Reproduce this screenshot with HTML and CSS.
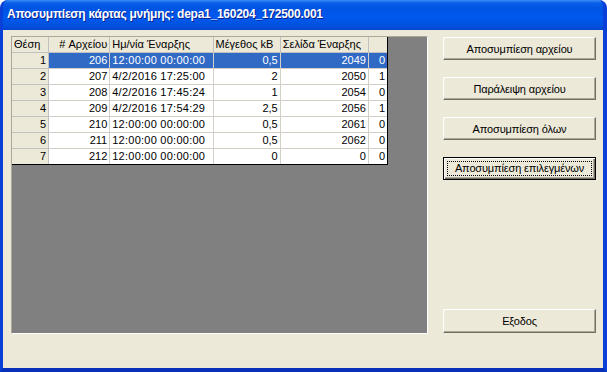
FILE: index.html
```html
<!DOCTYPE html>
<html lang="el">
<head>
    <meta charset="UTF-8">
    <title>Αποσυμπίεση κάρτας μνήμης</title>
    <link rel="stylesheet" href="styles.css">
</head>
<body>
    <div class="window">
        <!-- Titlebar -->
        <div class="titlebar">Αποσυμπίεση κάρτας μνήμης: depa1_160204_172500.001</div>

        <div class="client">
            <!-- Lijst met bestanden -->
            <div class="grid-box">
                <table class="grid">
                    <colgroup>
                        <col style="width:37px">
                        <col style="width:61px">
                        <col style="width:103px">
                        <col style="width:67px">
                        <col style="width:88px">
                        <col style="width:18px">
                    </colgroup>
                    <thead>
                        <tr>
                            <th>Θέση</th>
                            <th class="num">#&nbsp;Αρχείου</th>
                            <th>Ημ/νία Έναρξης</th>
                            <th>Μέγεθος kB</th>
                            <th>Σελίδα Έναρξης</th>
                            <th></th>
                        </tr>
                    </thead>
                    <tbody>
                        <tr class="selected">
                            <th class="num">1</th><td class="num">206</td><td class="date">12:00:00 00:00:00</td><td class="num">0,5</td><td class="num">2049</td><td class="num">0</td>
                        </tr>
                        <tr>
                            <th class="num">2</th><td class="num">207</td><td class="date">4/2/2016 17:25:00</td><td class="num">2</td><td class="num">2050</td><td class="num">1</td>
                        </tr>
                        <tr>
                            <th class="num">3</th><td class="num">208</td><td class="date">4/2/2016 17:45:24</td><td class="num">1</td><td class="num">2054</td><td class="num">0</td>
                        </tr>
                        <tr>
                            <th class="num">4</th><td class="num">209</td><td class="date">4/2/2016 17:54:29</td><td class="num">2,5</td><td class="num">2056</td><td class="num">1</td>
                        </tr>
                        <tr>
                            <th class="num">5</th><td class="num">210</td><td class="date">12:00:00 00:00:00</td><td class="num">0,5</td><td class="num">2061</td><td class="num">0</td>
                        </tr>
                        <tr>
                            <th class="num">6</th><td class="num">211</td><td class="date">12:00:00 00:00:00</td><td class="num">0,5</td><td class="num">2062</td><td class="num">0</td>
                        </tr>
                        <tr>
                            <th class="num">7</th><td class="num">212</td><td class="date">12:00:00 00:00:00</td><td class="num">0</td><td class="num">0</td><td class="num">0</td>
                        </tr>
                    </tbody>
                </table>
            </div>

            <!-- Knoppen -->
            <div class="buttons">
                <button class="btn">Αποσυμπίεση αρχείου</button>
                <button class="btn">Παράλειψη αρχείου</button>
                <button class="btn">Αποσυμπίεση όλων</button>
                <button class="btn default"><span>Αποσυμπίεση επιλεγμένων</span></button>
                <button class="btn exit">Εξοδος</button>
            </div>
        </div>
    </div>
</body>
</html>
```

FILE: styles.css
```css
body {
    margin: 0;
    padding: 0;
    background: #ffffff;
}
.window {
    width: 607px;
    height: 372px;
    box-sizing: border-box;
    display: flex;
    flex-direction: column;
    background: #0a50dc;
    border-radius: 8px 8px 0 0;
    border-left: 3px solid #0a3fd8;
    border-right: 4px solid #0a3fd8;
    border-bottom: 4px solid #0831b9;
    overflow: hidden;
}
.titlebar {
    height: 30px;
    flex: none;
    box-sizing: border-box;
    margin: 0 -4px 0 -3px;
    padding: 7px 0 0 7px;
    color: #ffffff;
    font-family: "Liberation Sans", Arial, sans-serif;
    font-weight: bold;
    font-size: 12px;
    letter-spacing: -0.25px;
    text-shadow: 1px 1px 0 #0a1e8c;
    background: linear-gradient(to bottom, #3b8cf5 0px, #0a5fe8 3px, #0054e3 8px, #0058ee 18px, #0052dd 26px, #0245d0 30px);
    border-radius: 8px 8px 0 0;
}
.client {
    flex: 1;
    display: flex;
    background: #ece9d8;
    padding: 6px 7px 0 8px;
    box-sizing: border-box;
}
.grid-box {
    width: 417px;
    height: 298px;
    box-sizing: border-box;
    background: #808080;
    border-top: 1px solid #aca899;
    border-left: 1px solid #aca899;
    border-right: 1px solid #ffffff;
    border-bottom: 1px solid #ffffff;
}
.grid {
    border-collapse: separate;
    border-spacing: 0;
    table-layout: fixed;
    width: 376px;
    background: #ffffff;
    border-right: 1px solid #000000;
    border-bottom: 1px solid #000000;
    font-family: "Liberation Sans", Arial, sans-serif;
    font-size: 11px;
    color: #000000;
}
.grid th,
.grid td {
    height: 15px;
    padding: 0 2px;
    border-right: 1px solid #d4d0c8;
    border-bottom: 1px solid #d4d0c8;
    text-align: left;
    font-weight: normal;
    white-space: nowrap;
    overflow: hidden;
    line-height: 15px;
}
.grid th {
    background: #ece9d8;
    border-right-color: #c0c0c0;
    border-bottom-color: #c0c0c0;
}
.grid tr > :last-child {
    border-right: none;
}
.grid tbody tr:last-child > * {
    border-bottom: none;
}
.grid .num {
    text-align: right;
}
.grid .date {
    letter-spacing: 0.25px;
}
.grid .selected td {
    background: #316ac5;
    color: #ffffff;
}
.buttons {
    margin-left: 15px;
    display: flex;
    flex-direction: column;
    gap: 17px;
    padding-top: 1px;
    padding-bottom: 1px;
    height: 298px;
    box-sizing: border-box;
}
.btn {
    width: 153px;
    height: 23px;
    padding: 0;
    background: #ece9d8;
    border-top: 1px solid #ffffff;
    border-left: 1px solid #ffffff;
    border-right: 1px solid #716f64;
    border-bottom: 1px solid #716f64;
    box-shadow: inset -1px -1px 0 #aca899;
    font-family: "Liberation Sans", Arial, sans-serif;
    font-size: 11px;
    letter-spacing: -0.15px;
    color: #000000;
    cursor: pointer;
}
.btn.default {
    border: 1px solid #000000;
    box-shadow: inset 1px 1px 0 #ffffff, inset -1px -1px 0 #716f64, inset -2px -2px 0 #aca899;
    padding: 3px;
}
.btn.default span {
    display: block;
    height: 100%;
    box-sizing: border-box;
    border: 1px dotted #000000;
    line-height: 13px;
}
.btn.exit {
    margin-top: auto;
    height: 24px;
}
```
